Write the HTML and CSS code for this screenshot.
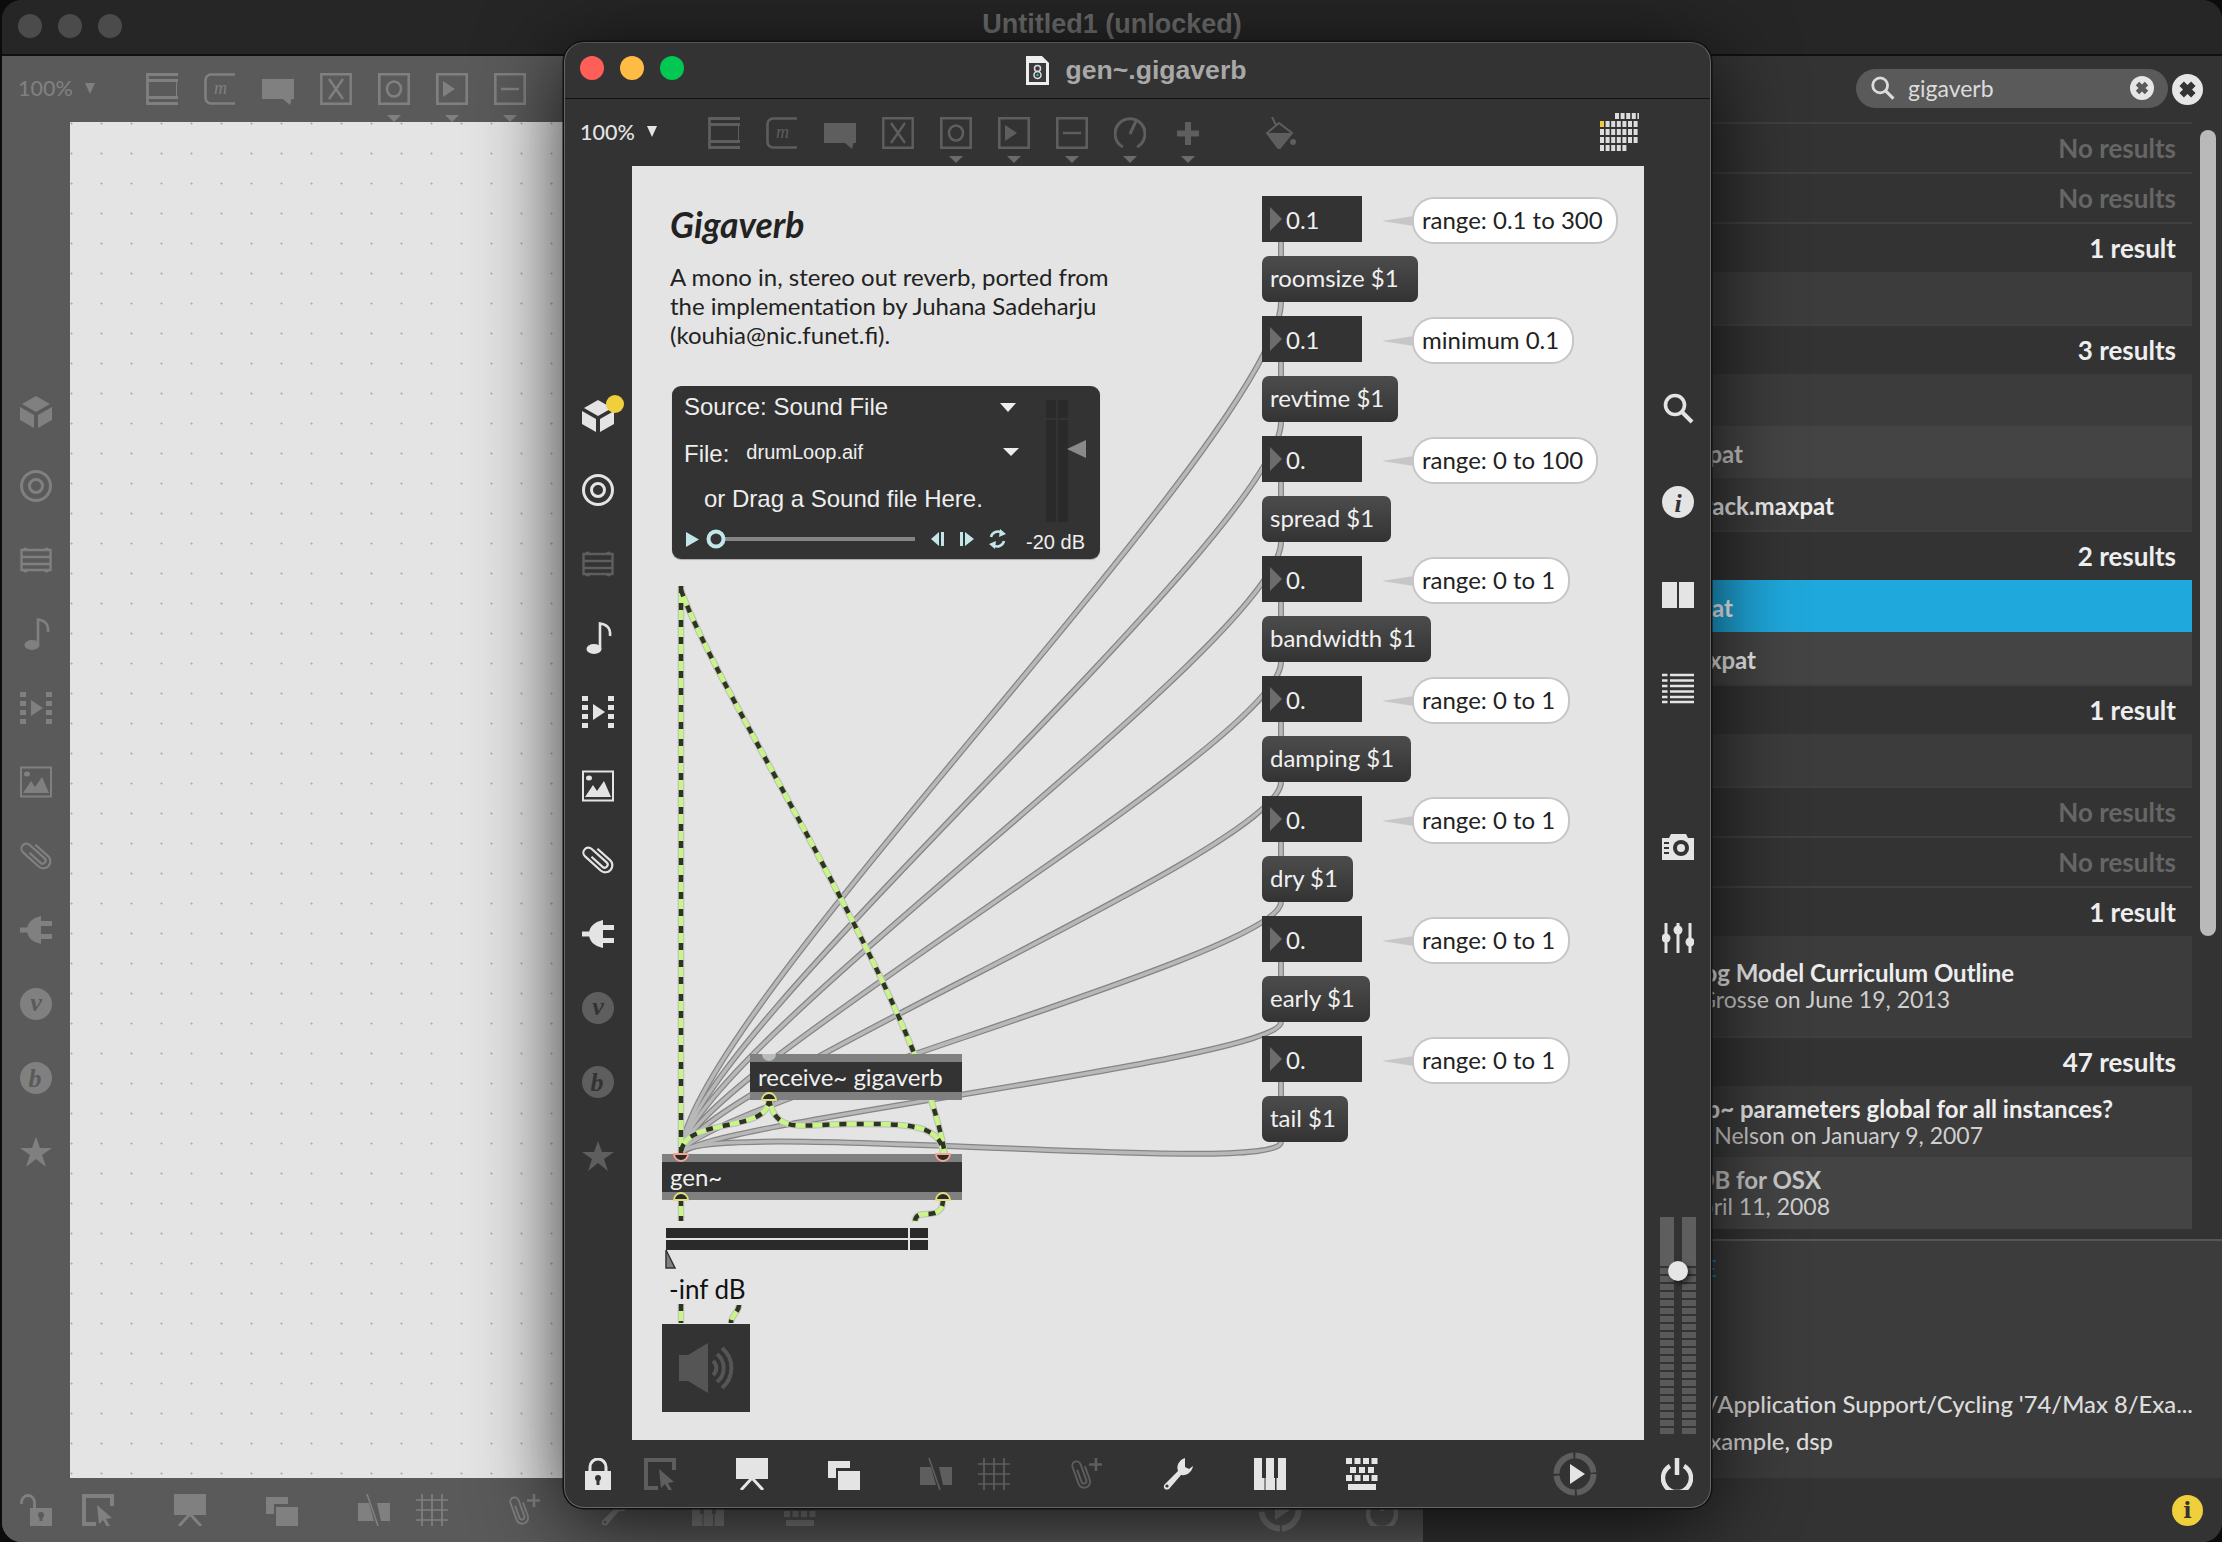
FILE: index.html
```html
<!DOCTYPE html>
<html>
  <head>
    <title>Untitled1 (unlocked)</title>
    <link rel="stylesheet" href="styles.css">
  </head>
  <body>
    <svg class="sprites" width="0" height="0">
      <symbol id="i-patcher" viewBox="0 0 32 32"><path d="M1.500 0V32M1 1.500H32M1 7.500H32M1 24.500H32M1 30.500H32" fill="none" stroke="currentColor" stroke-width="2.800"/><path d="M30.500 8V24" fill="none" stroke="currentColor" stroke-width="1"/></symbol>
      <symbol id="i-message" viewBox="0 0 32 32"><path d="M31 1.500H7a5.500 5.500 0 0 0-5.500 5.500V25a5.500 5.500 0 0 0 5.500 5.500H31" fill="none" stroke="currentColor" stroke-width="2.600"/><text x="10" y="21" class="svg-m" fill="currentColor">m</text></symbol>
      <symbol id="i-comment" viewBox="0 0 32 32"><path d="M0 6H32V26H29.500L28 32L21 26H0Z" fill="currentColor"/></symbol>
      <symbol id="i-xbox" viewBox="0 0 32 32"><path d="M1.300 1.300H30.700V30.700H1.300ZM9 6L23 26M23 6L9 26" fill="none" stroke="currentColor" stroke-width="2.400"/></symbol>
      <symbol id="i-obox" viewBox="0 0 32 32"><path d="M1.300 1.300H30.700V30.700H1.300Z" fill="none" stroke="currentColor" stroke-width="2.600"/><ellipse cx="16" cy="16" rx="7" ry="7.500" fill="none" stroke="currentColor" stroke-width="2.600"/></symbol>
      <symbol id="i-pbox" viewBox="0 0 32 32"><path d="M1.300 1.300H30.700V30.700H1.300Z" fill="none" stroke="currentColor" stroke-width="2.600"/><path d="M7 8L19 16L7 24Z" fill="currentColor"/></symbol>
      <symbol id="i-mbox" viewBox="0 0 32 32"><path d="M1.300 1.300H30.700V30.700H1.300ZM7 16H25" fill="none" stroke="currentColor" stroke-width="2.600"/></symbol>
      <symbol id="i-dial" viewBox="0 0 32 32"><path d="M9 30A15 15 0 1 1 23 30M16 17L22 4" fill="none" stroke="currentColor" stroke-width="3"/></symbol>
      <symbol id="i-plus" viewBox="0 0 32 32"><path d="M16 5V28M5 16.500H27" fill="none" stroke="currentColor" stroke-width="6"/></symbol>
      <symbol id="i-paint" viewBox="0 0 32 32"><path d="M3 16L15 6L28 16L15 32ZM12 8L8 0" fill="none" stroke="currentColor" stroke-width="2"/><path d="M3 16H28L15 32Z" fill="currentColor"/><circle cx="29" cy="25" r="3" fill="currentColor"/></symbol>

      <symbol id="i-cube" viewBox="0 0 32 32"><path d="M16 0L30 8L16 16L2 8ZM0 11L14 19V32L0 24ZM32 11L18 19V32L32 24Z" fill="currentColor"/></symbol>
      <symbol id="i-target" viewBox="0 0 32 32"><circle cx="16" cy="16" r="14.500" fill="none" stroke="currentColor" stroke-width="3"/><circle cx="16" cy="16" r="6.500" fill="none" stroke="currentColor" stroke-width="3"/></symbol>
      <symbol id="i-strip" viewBox="0 0 32 32"><path d="M1.500 6H30.500V26H1.500ZM1.500 13H30.500M1.500 20H30.500" fill="none" stroke="currentColor" stroke-width="2.400"/><path d="M3 6a2.500 2.500 0 0 1 5 0ZM24 6a2.500 2.500 0 0 1 5 0ZM3 26a2.500 2.500 0 0 0 5 0ZM24 26a2.500 2.500 0 0 0 5 0Z" fill="currentColor"/></symbol>
      <symbol id="i-note" viewBox="0 0 32 32"><ellipse cx="12" cy="27" rx="7.500" ry="5" fill="currentColor"/><path d="M18 27V1.500C24 2 29 6 28 14" fill="none" stroke="currentColor" stroke-width="2.600"/></symbol>
      <symbol id="i-film" viewBox="0 0 32 32"><path d="M0 0H6V5H0ZM0 9H6V14H0ZM0 18H6V23H0ZM0 27H6V32H0ZM26 0H32V5H26ZM26 9H32V14H26ZM26 18H32V23H26ZM26 27H32V32H26ZM11 8L23 16L11 24Z" fill="currentColor"/></symbol>
      <symbol id="i-image" viewBox="0 0 32 32"><path d="M1 1.500H31V30.500H1Z" fill="none" stroke="currentColor" stroke-width="2"/><path d="M3 27L11 15L15 21L22 11L29 27Z" fill="currentColor"/><ellipse cx="7" cy="8" rx="3" ry="2.500" fill="currentColor"/></symbol>
      <symbol id="i-clip" viewBox="0 0 32 32"><path transform="rotate(-48 16 16)" d="M14 9V24a3 3 0 0 0 6 0V4a5 5 0 0 0-10 0V25a7 7 0 0 0 14 0V8" fill="none" stroke="currentColor" stroke-width="2.200"/></symbol>
      <symbol id="i-plug" viewBox="0 0 32 32"><path d="M0 13.500H10V18.500H0ZM7 16C7 9 12 4 21 2V30C12 28 7 23 7 16ZM20 7H32V12H20ZM20 20H32V25H20Z" fill="currentColor"/></symbol>
      <symbol id="i-vee" viewBox="0 0 32 32"><circle cx="16" cy="16" r="16" fill="currentColor"/><text x="16" y="23" class="svg-badge" fill="var(--ico-bg)">v</text></symbol>
      <symbol id="i-bee" viewBox="0 0 32 32"><circle cx="16" cy="16" r="16" fill="currentColor"/><text x="15" y="25" class="svg-badge" fill="var(--ico-bg)">b</text></symbol>
      <symbol id="i-star" viewBox="0 0 32 32"><path d="M16 1L20 12H32L22 19L26 31L16 23L6 31L10 19L0 12H12Z" fill="currentColor"/></symbol>

      <symbol id="i-search" viewBox="0 0 32 32"><circle cx="13" cy="12" r="9.500" fill="none" stroke="currentColor" stroke-width="3.600"/><path d="M20 19L30 29" fill="none" stroke="currentColor" stroke-width="4"/></symbol>
      <symbol id="i-info" viewBox="0 0 32 32"><circle cx="16" cy="16" r="16" fill="currentColor"/><text x="16" y="26" class="svg-badge" fill="var(--ico-bg)">i</text></symbol>
      <symbol id="i-close" viewBox="0 0 32 32"><circle cx="16" cy="16" r="16" fill="currentColor"/><path d="M10 10L22 22M22 10L10 22" fill="none" stroke="var(--ico-bg)" stroke-width="6.500"/></symbol>
      <symbol id="i-cols" viewBox="0 0 32 32"><path d="M0 3H15V29H0ZM17 3H32V29H17Z" fill="currentColor"/></symbol>
      <symbol id="i-list" viewBox="0 0 32 32"><path d="M0 3H5.500M8 3H32M0 8.500H5.500M8 8.500H32M0 14H5.500M8 14H32M0 19.500H5.500M8 19.500H32M0 25H5.500M8 25H32M0 30H5.500M8 30H32" fill="none" stroke="currentColor" stroke-width="2.400"/></symbol>
      <symbol id="i-camera" viewBox="0 0 32 32"><path d="M0 8H7L9 4H24L26 8H32V30H0Z" fill="currentColor"/><circle cx="19" cy="18" r="8" fill="var(--ico-bg)"/><circle cx="19" cy="18" r="4" fill="currentColor"/><path d="M2 13H7M2 18H7M2 23H7" stroke="var(--ico-bg)" stroke-width="2"/></symbol>
      <symbol id="i-sliders" viewBox="0 0 32 32"><path d="M4 1V31M16 1V31M28 1V31" stroke="currentColor" stroke-width="3"/><circle cx="4" cy="16" r="4.500" fill="currentColor"/><circle cx="16" cy="8" r="4.500" fill="currentColor"/><circle cx="28" cy="20" r="4.500" fill="currentColor"/></symbol>

      <symbol id="i-lock" viewBox="0 0 32 32"><path d="M8 15V9a8 8 0 0 1 16 0V15" fill="none" stroke="currentColor" stroke-width="3"/><path d="M3 13H29V32H3Z" fill="currentColor"/><circle cx="16" cy="20" r="3" fill="var(--ico-bg)"/><path d="M14.500 20H17.500V27H14.500Z" fill="var(--ico-bg)"/></symbol>
      <symbol id="i-unlock" viewBox="0 0 32 32"><path d="M1.500 10V8a6.500 6.500 0 0 1 13 0V15" fill="none" stroke="currentColor" stroke-width="2.800"/><path d="M10 14H32V32H10Z" fill="currentColor"/><circle cx="21" cy="21" r="3" fill="var(--ico-bg)"/><path d="M19.500 21H22.500V27H19.500Z" fill="var(--ico-bg)"/></symbol>
      <symbol id="i-select" viewBox="0 0 32 32"><path d="M2 32V2H30V12M2 30H14" fill="none" stroke="currentColor" stroke-width="4"/><path d="M15 11L30 24L24 25L28 32L25 33L21 26L17 30Z" fill="currentColor"/></symbol>
      <symbol id="i-present" viewBox="0 0 32 32"><path d="M0 0H32V21H0Z" fill="currentColor"/><path d="M16 20L5 32M16 20L27 32" fill="none" stroke="currentColor" stroke-width="3"/></symbol>
      <symbol id="i-layers" viewBox="0 0 32 32"><path d="M0 3H22V10H8V20H0ZM10 13H32V32H10Z" fill="currentColor"/></symbol>
      <symbol id="i-split" viewBox="0 0 32 32"><path d="M0 9H11L16 27H0ZM19 9H32V27H23Z" fill="currentColor"/><path d="M9 0L20 32" stroke="currentColor" stroke-width="1.600"/></symbol>
      <symbol id="i-grid" viewBox="0 0 32 32"><path d="M6 0V32M16 0V32M26 0V32M0 6H32M0 16H32M0 26H32" fill="none" stroke="currentColor" stroke-width="1.700"/></symbol>
      <symbol id="i-clipadd" viewBox="0 0 32 32"><path transform="translate(-2 3) rotate(-20 14 16) scale(.85)" d="M14 9V24a3 3 0 0 0 6 0V4a5 5 0 0 0-10 0V25a7 7 0 0 0 14 0V8" fill="none" stroke="currentColor" stroke-width="2.200"/><path d="M26 0V13M19 6.500H32" stroke="currentColor" stroke-width="2.600"/></symbol>
      <symbol id="i-wrench" viewBox="0 0 32 32"><path d="M23 0C17 2 14 8 16 13L3 26C0 29 3 33 7 31L19 17C25 18 30 14 31 8L27 11L23 9Z" fill="currentColor"/><circle cx="5" cy="28" r="1.600" fill="var(--ico-bg)"/></symbol>
      <symbol id="i-piano" viewBox="0 0 32 32"><path d="M0 0H8V20H10.500V32H0ZM12 0H20V20H21V32H11.500V20H12ZM24 0H32V32H22.500V20H24Z" fill="currentColor"/></symbol>
      <symbol id="i-keys" viewBox="0 0 32 32"><path d="M0 0H6V6H0ZM8.500 0H14.500V6H8.500ZM17 0H23V6H17ZM25.500 0H31.500V6H25.500ZM4 9H10V15H4ZM13 9H19V15H13ZM22 9H28V15H22ZM0 17H6V23H0ZM8.500 17H14.500V23H8.500ZM17 17H23V23H17ZM25.500 17H31.500V23H25.500ZM2 26H30V32H2Z" fill="currentColor"/></symbol>
      <symbol id="i-audio" viewBox="0 0 44 44"><circle cx="22" cy="22" r="18.500" fill="none" stroke="currentColor" stroke-width="6" stroke-dasharray="27 2"/><path d="M17 12L32 22L17 32Z" fill="var(--ico-hi)"/></symbol>
      <symbol id="i-power" viewBox="0 0 32 32"><path d="M9 8A14 14 0 1 0 23 8" fill="none" stroke="currentColor" stroke-width="4.500"/><path d="M16 0V17" stroke="currentColor" stroke-width="4.500"/></symbol>
    </svg>

    <div class="desk">

      <div class="window back">
        <div class="titlebar">
          <div class="lights"><i></i><i></i><i></i></div>
          <div class="title-back">Untitled1 (unlocked)</div>
        </div>
        <div class="back-split">
          <div class="patcher">
            <div class="toolbar">
              <div class="zoom">100%<span class="zoom-arrow"></span></div>
              <span class="tool"><svg class="icon"><use href="#i-patcher"/></svg></span>
              <span class="tool"><svg class="icon"><use href="#i-message"/></svg></span>
              <span class="tool"><svg class="icon"><use href="#i-comment"/></svg></span>
              <span class="tool"><svg class="icon"><use href="#i-xbox"/></svg></span>
              <span class="tool menu"><svg class="icon"><use href="#i-obox"/></svg></span>
              <span class="tool menu"><svg class="icon"><use href="#i-pbox"/></svg></span>
              <span class="tool menu"><svg class="icon"><use href="#i-mbox"/></svg></span>
            </div>
            <div class="patcher-body">
              <div class="side">
                <svg class="icon"><use href="#i-cube"/></svg>
                <svg class="icon"><use href="#i-target"/></svg>
                <svg class="icon"><use href="#i-strip"/></svg>
                <svg class="icon"><use href="#i-note"/></svg>
                <svg class="icon"><use href="#i-film"/></svg>
                <svg class="icon"><use href="#i-image"/></svg>
                <svg class="icon"><use href="#i-clip"/></svg>
                <svg class="icon"><use href="#i-plug"/></svg>
                <svg class="icon"><use href="#i-vee"/></svg>
                <svg class="icon"><use href="#i-bee"/></svg>
                <svg class="icon"><use href="#i-star"/></svg>
              </div>
              <div class="canvas dotted"></div>
            </div>
            <div class="bottombar">
              <svg class="icon"><use href="#i-unlock"/></svg>
              <svg class="icon b-select"><use href="#i-select"/></svg>
              <svg class="icon b-wide"><use href="#i-present"/></svg>
              <svg class="icon b-wide"><use href="#i-layers"/></svg>
              <svg class="icon b-wide"><use href="#i-split"/></svg>
              <svg class="icon"><use href="#i-grid"/></svg>
              <svg class="icon b-wide"><use href="#i-clipadd"/></svg>
              <svg class="icon b-wide"><use href="#i-wrench"/></svg>
              <svg class="icon b-wide"><use href="#i-piano"/></svg>
              <svg class="icon b-wide"><use href="#i-keys"/></svg>
              <svg class="icon-audio"><use href="#i-audio"/></svg>
              <svg class="icon b-power"><use href="#i-power"/></svg>
            </div>
          </div>

          <div class="finder">
            <div class="finder-top">
              <div class="search">
                <svg class="search-icon"><use href="#i-search"/></svg>
                <span class="search-text">gigaverb</span>
                <svg class="clear small"><use href="#i-close"/></svg>
              </div>
              <svg class="clear"><use href="#i-close"/></svg>
            </div>
            <div class="finder-mid">
              <div class="results">
                <div class="head none">No results</div>
                <div class="head none">No results</div>
                <div class="head">1 result</div>
                <div class="item"></div>
                <div class="head">3 results</div>
                <div class="item"></div>
                <div class="item alt"><span class="line dim e-pat">gigaverb.maxpat</span></div>
                <div class="item"><span class="line e-ack">gigaverb.rack.maxpat</span></div>
                <div class="head">2 results</div>
                <div class="item selected"><span class="line e-at">gigaverb.maxpat</span></div>
                <div class="item alt"><span class="line e-xpat">gigaverb.maxpat</span></div>
                <div class="head">1 result</div>
                <div class="item"></div>
                <div class="head none">No results</div>
                <div class="head none">No results</div>
                <div class="head">1 result</div>
                <div class="item tall">
                  <span class="line e-curric">Analog Model Curriculum Outline</span>
                  <span class="sub e-curric-sub">Posted by Grosse on June 19, 2013</span>
                </div>
                <div class="head">47 results</div>
                <div class="item two">
                  <span class="line e-param">Make gigaverb~ parameters global for all instances?</span>
                  <span class="sub e-param-sub">Posted by Nelson on January 9, 2007</span>
                </div>
                <div class="item two alt">
                  <span class="line dim e-osx">SDB for OSX</span>
                  <span class="sub e-osx-sub">Posted on April 11, 2008</span>
                </div>
              </div>
              <div class="scroll-track"><div class="scroll-thumb"></div></div>
            </div>
            <div class="detail">
              <span class="detail-link">gigaverb E</span>
              <span class="detail-line">~/Library/Application Support/Cycling '74/Max 8/Exa...</span>
              <span class="detail-line e-tags">gen, example, dsp</span>
            </div>
            <div class="finder-foot"><span class="info-badge">i</span></div>
          </div>
        </div>
      </div>

      <div class="window main">
        <div class="titlebar">
          <div class="lights color"><i></i><i></i><i></i></div>
          <div class="title-main">
            <svg class="doc" viewBox="0 0 23 29">
              <path d="M0 0H16L23 7V29H0Z" fill="#eee"/>
              <path d="M3 7H20V26H3Z" fill="#3a3a3a"/>
              <circle cx="11.500" cy="12.500" r="3" fill="none" stroke="#ddd" stroke-width="1.500"/>
              <circle cx="11.500" cy="19" r="3.500" fill="none" stroke="#ddd" stroke-width="1.500"/>
              <circle cx="11.500" cy="19" r="1.200" fill="#2fb8c6"/>
            </svg>
            gen~.gigaverb
          </div>
        </div>
        <div class="toolbar">
          <div class="zoom">100%<span class="zoom-arrow"></span></div>
          <span class="tool"><svg class="icon off"><use href="#i-patcher"/></svg></span>
          <span class="tool"><svg class="icon off"><use href="#i-message"/></svg></span>
          <span class="tool"><svg class="icon off"><use href="#i-comment"/></svg></span>
          <span class="tool"><svg class="icon off"><use href="#i-xbox"/></svg></span>
          <span class="tool menu"><svg class="icon off"><use href="#i-obox"/></svg></span>
          <span class="tool menu"><svg class="icon off"><use href="#i-pbox"/></svg></span>
          <span class="tool menu"><svg class="icon off"><use href="#i-mbox"/></svg></span>
          <span class="tool menu"><svg class="icon off"><use href="#i-dial"/></svg></span>
          <span class="tool menu"><svg class="icon off"><use href="#i-plus"/></svg></span>
          <span class="tool paint"><svg class="icon off"><use href="#i-paint"/></svg></span>
          <svg class="palette" viewBox="0 0 39 39">
            <path d="M15 3H39M0 11H39M0 19H39M0 27H39M0 35H27" fill="none" stroke="#ddd" stroke-width="6" stroke-dasharray="4 1.600"/>
            <path d="M0 8H4V14H0Z" fill="#f0c93c"/>
          </svg>
        </div>
        <div class="patcher-body">
          <div class="side">
            <div class="cube-wrap"><svg class="icon"><use href="#i-cube"/></svg><span class="cube-dot"></span></div>
            <svg class="icon"><use href="#i-target"/></svg>
            <svg class="icon off"><use href="#i-strip"/></svg>
            <svg class="icon"><use href="#i-note"/></svg>
            <svg class="icon"><use href="#i-film"/></svg>
            <svg class="icon"><use href="#i-image"/></svg>
            <svg class="icon"><use href="#i-clip"/></svg>
            <svg class="icon"><use href="#i-plug"/></svg>
            <svg class="icon off"><use href="#i-vee"/></svg>
            <svg class="icon off"><use href="#i-bee"/></svg>
            <svg class="icon off"><use href="#i-star"/></svg>
          </div>

          <div class="canvas">
            <svg class="cords" viewBox="632 166 1012 1274">
              <defs>
                <g id="gray-cords">
                  <path d="M1281 242V256M1281 362V376M1281 482V496M1281 602V616M1281 722V736M1281 842V856M1281 962V976M1281 1082V1096"/>
                  <path d="M1281 302C1281 430 681 1025 681 1155"/>
                  <path d="M1281 422C1281 530 681 1045 681 1155"/>
                  <path d="M1281 542C1281 640 681 1060 681 1155"/>
                  <path d="M1281 662C1281 745 681 1080 681 1155"/>
                  <path d="M1281 782C1281 850 681 1095 681 1155"/>
                  <path d="M1281 902C1281 955 681 1110 681 1155"/>
                  <path d="M1281 1022C1281 1060 681 1125 681 1155"/>
                  <path d="M1281 1142C1281 1178 681 1116 681 1155"/>
                </g>
                <g id="sig-cords">
                  <path d="M681 586V1155"/>
                  <path d="M681 590C720 700 920 1000 945 1155"/>
                  <path d="M769 1099C769 1135 681 1115 681 1155"/>
                  <path d="M769 1099C776 1135 800 1124 850 1124S943 1122 943 1155"/>
                  <path d="M681 1199V1221"/>
                  <path d="M943 1199C943 1225 915 1205 915 1222"/>
                  <path d="M681 1304V1323"/>
                  <path d="M739 1305C739 1312 731 1315 731 1323"/>
                </g>
              </defs>
              <use href="#gray-cords" class="cord-edge"/>
              <use href="#gray-cords" class="cord-fill"/>
              <use href="#sig-cords" class="sig-edge"/>
              <use href="#sig-cords" class="sig-fill"/>
              <use href="#sig-cords" class="sig-dash"/>
            </svg>

            <h1 class="patch-title">Gigaverb</h1>
            <p class="patch-text">A mono in, stereo out reverb, ported from<br>the implementation by Juhana Sadeharju<br>(kouhia@nic.funet.fi).</p>

            <div class="player">
              <div class="player-main">
                <div class="player-row r1">Source: Sound File<span class="drop"></span></div>
                <div class="player-row r2">File:<span class="file-name">drumLoop.aif</span><span class="drop small"></span></div>
                <div class="player-row r3">or Drag a Sound file Here.</div>
                <svg class="transport" viewBox="684 524 336 30">
                  <path d="M686 532L699 539.500L686 547Z" fill="#c2e6ea"/>
                  <path d="M716 537H915V541H716Z" fill="#858585"/>
                  <circle cx="716" cy="539" r="7.500" fill="#333" stroke="#c2e6ea" stroke-width="4"/>
                  <path d="M931 539L939 532V546ZM941 532H944V546H941ZM960 532H963V546H960ZM965 532L974 539L965 546Z" fill="#c2e6ea"/>
                  <path d="M991 537a7 7 0 0 1 11-4M1004 541a7 7 0 0 1-11 4" fill="none" stroke="#c2e6ea" stroke-width="2.500"/>
                  <path d="M1000 529L1006 534L999 537ZM995 549L989 544L996 541Z" fill="#c2e6ea"/>
                </svg>
              </div>
              <div class="player-meter"><i></i><i></i></div>
              <span class="player-gain"></span>
              <span class="player-db">-20 dB</span>
            </div>

            <div class="params">
              <div class="param-row"><div class="num"><span class="num-arrow"></span>0.1</div><div class="bubble">range: 0.1 to 300</div></div>
              <div class="msg m-roomsize">roomsize $1</div>
              <div class="param-row"><div class="num"><span class="num-arrow"></span>0.1</div><div class="bubble">minimum 0.1</div></div>
              <div class="msg m-revtime">revtime $1</div>
              <div class="param-row"><div class="num"><span class="num-arrow"></span>0.</div><div class="bubble">range: 0 to 100</div></div>
              <div class="msg m-spread">spread $1</div>
              <div class="param-row"><div class="num"><span class="num-arrow"></span>0.</div><div class="bubble">range: 0 to 1</div></div>
              <div class="msg m-bandwidth">bandwidth $1</div>
              <div class="param-row"><div class="num"><span class="num-arrow"></span>0.</div><div class="bubble">range: 0 to 1</div></div>
              <div class="msg m-damping">damping $1</div>
              <div class="param-row"><div class="num"><span class="num-arrow"></span>0.</div><div class="bubble">range: 0 to 1</div></div>
              <div class="msg m-dry">dry $1</div>
              <div class="param-row"><div class="num"><span class="num-arrow"></span>0.</div><div class="bubble">range: 0 to 1</div></div>
              <div class="msg m-early">early $1</div>
              <div class="param-row"><div class="num"><span class="num-arrow"></span>0.</div><div class="bubble">range: 0 to 1</div></div>
              <div class="msg m-tail">tail $1</div>
            </div>

            <div class="box obj-receive">receive~ gigaverb</div>
            <div class="box obj-gen">gen~</div>
            <div class="obj-meter"><i></i><i></i></div>
            <div class="obj-label">-inf dB</div>
            <div class="obj-speaker">
              <svg class="speaker" viewBox="0 0 88 88">
                <path d="M17 31H26L46 19V69L26 57H17Z" fill="#555"/>
                <path d="M51 37a9 9 0 0 1 0 14M55 30a18 18 0 0 1 0 28M60 24a26 26 0 0 1 0 40" fill="none" stroke="#555" stroke-width="4"/>
              </svg>
            </div>

            <svg class="cords over" viewBox="632 166 1012 1274">
              <path class="port-in" d="M674 1154a7 7 0 0 0 14 0ZM936 1154a7 7 0 0 0 14 0Z"/>
              <path class="port-out" d="M674 1200a7 7 0 0 1 14 0ZM936 1200a7 7 0 0 1 14 0ZM762 1100a7 7 0 0 1 14 0Z"/>
              <path d="M762 1054a7 7 0 0 0 14 0Z" fill="#b4bcc0"/>
              <path d="M666 1250V1268H675Z" fill="#808080" stroke="#333" stroke-width="1.500"/>
            </svg>
          </div>

          <div class="side right">
            <svg class="icon"><use href="#i-search"/></svg>
            <svg class="icon"><use href="#i-info"/></svg>
            <svg class="icon"><use href="#i-cols"/></svg>
            <svg class="icon"><use href="#i-list"/></svg>
            <svg class="icon group"><use href="#i-camera"/></svg>
            <svg class="icon after-group"><use href="#i-sliders"/></svg>
            <div class="vol"><i></i><i></i><span class="vol-knob"></span></div>
          </div>
        </div>
        <div class="bottombar">
          <svg class="icon"><use href="#i-lock"/></svg>
          <svg class="icon off b-select"><use href="#i-select"/></svg>
          <svg class="icon b-wide"><use href="#i-present"/></svg>
          <svg class="icon b-wide"><use href="#i-layers"/></svg>
          <svg class="icon off b-wide"><use href="#i-split"/></svg>
          <svg class="icon off"><use href="#i-grid"/></svg>
          <svg class="icon off b-wide"><use href="#i-clipadd"/></svg>
          <svg class="icon b-wide"><use href="#i-wrench"/></svg>
          <svg class="icon b-wide"><use href="#i-piano"/></svg>
          <svg class="icon b-wide"><use href="#i-keys"/></svg>
          <svg class="icon-audio off"><use href="#i-audio"/></svg>
          <svg class="icon b-power"><use href="#i-power"/></svg>
        </div>
      </div>

    </div>
  </body>
</html>
```

FILE: styles.css
```css
body { margin: 0; background: #0c0c0c; font-family: "Lato", "Liberation Sans", sans-serif; }

.sprites { display: none; }
.svg-m { font: italic 18px "Liberation Serif", serif; }
.svg-badge { font: italic bold 26px "Liberation Serif", serif; text-anchor: middle; }

.desk { position: relative; width: 2222px; height: 1542px; overflow: hidden; }

/* windows */
.window { position: absolute; display: flex; flex-direction: column; box-sizing: border-box; }
.back { left: 2px; top: 0; width: 2220px; height: 1542px; border-radius: 20px; overflow: hidden; background: #333; color: #808080; --ico-bg: #5a5a5a; --ico-hi: #808080; }
.main {
  left: 564px; top: 42px; width: 1147px; height: 1466px;
  border-radius: 20px; overflow: hidden; background: #333; color: #e4e4e4; --ico-bg: #333; --ico-hi: #e4e4e4;
  box-shadow: 0 0 0 1.5px #111, 0 14px 85px rgba(0, 0, 0, .8);
}
/* overflow:hidden would not clip the shadow, the light rim is drawn apart */
.main::after { content: ""; position: absolute; inset: 0; border-radius: 20px; border: 1.5px solid #666; border-top-color: #555; pointer-events: none; }

.titlebar { position: relative; flex: none; display: flex; align-items: center; justify-content: center; }
.back .titlebar { height: 54px; background: #262626; border-bottom: 2px solid #101010; }
.main .titlebar { height: 56px; background: #333; border-bottom: 1.5px solid #111; }

.lights { position: absolute; left: 16px; top: 14px; display: flex; gap: 16px; }
.lights i { display: block; width: 24px; height: 24px; border-radius: 50%; background: #4b4b4b; }
.lights.color { left: 16px; }
.lights.color i:nth-child(1) { background: #ff5f57; }
.lights.color i:nth-child(2) { background: #ffbb44; }
.lights.color i:nth-child(3) { background: #00c853; }

.title-back { font: bold 27px "Liberation Sans", sans-serif; color: #6e6e6e; margin-top: -6px; }
.title-main { display: flex; align-items: center; gap: 16px; font: bold 26.600px "Liberation Sans", sans-serif; color: #a8a8a8; margin-left: -2px; }
.doc { width: 23px; height: 29px; }

/* icons */
.icon { display: block; flex: none; width: 32px; height: 32px; color: inherit; }
.back .icon { color: #808080; }
.icon.off, .icon-audio.off { color: #5e5e5e; }
.icon-audio { display: block; width: 44px; height: 44px; flex: none; margin-left: auto; }

/* toolbar */
.toolbar { flex: none; display: flex; align-items: center; gap: 26px; }
.back .toolbar { height: 66px; background: #5a5a5a; }
.main .toolbar { height: 67px; background: #333; }
.zoom { width: 128px; margin-left: 16px; margin-right: -26px; font: 500 21.500px "Lato", sans-serif; display: flex; align-items: center; gap: 12px; margin-top: -2px; }
.main .zoom { color: #e4e4e4; }
.zoom-arrow { width: 0; height: 0; border: 5.500px solid transparent; border-top: 11px solid currentColor; border-bottom: 0; }
.tool { position: relative; display: block; width: 32px; height: 32px; }
.tool.menu::after { content: ""; position: absolute; left: 9px; top: 39px; border: 7px solid transparent; border-top: 7px solid #6a6a6a; border-bottom: 0; }
.back .tool.menu::after { border-top-color: #808080; top: 42px; }
.tool.paint { margin-left: 34px; }
.palette { width: 39px; height: 39px; margin-left: auto; margin-right: 72px; }

/* patcher */
.back-split { flex: 1; min-height: 0; display: flex; }
.patcher { flex: none; width: 1421px; display: flex; flex-direction: column; background: #5a5a5a; }
.patcher-body { flex: 1; min-height: 0; display: flex; }
.side { flex: none; box-sizing: border-box; width: 68px; display: flex; flex-direction: column; align-items: center; gap: 42px; }
.back .side { padding-top: 274px; background: #5a5a5a; }
.main .side { padding-top: 234px; background: #333; }
.main .side.right { width: 67px; padding-top: 227px; gap: 61px; }
.side.right .group { margin-top: 65px; }
.side.right .after-group { margin-top: -1px; }
.canvas { position: relative; flex: 1; min-width: 0; background: #e4e4e4; overflow: hidden; }
.canvas.dotted { background-image: radial-gradient(circle at 1.5px 1.5px, #b0b0b0 .8px, transparent 1.4px); background-size: 30px 30px; }

.bottombar { flex: none; display: flex; align-items: center; gap: 26px; }
.back .bottombar { height: 64px; padding: 0 25px 0 18px; background: #5a5a5a; }
.main .bottombar { height: 68px; padding: 0 18px 0 18px; background: #333; }
.b-select { margin-left: 4px; }
.b-wide { margin-left: 34px; }
.b-power { margin-left: 38px; }

/* cube with the yellow update dot */
.cube-wrap { position: relative; width: 32px; height: 32px; }
.cube-dot { position: absolute; left: 24px; top: -5px; width: 18px; height: 18px; border-radius: 50%; background: #f0cf3c; }

/* volume on the right side */
.vol { position: relative; margin-top: auto; margin-bottom: 5px; width: 36px; height: 218px; display: flex; justify-content: space-between; }
.vol i { display: block; width: 14px; height: 100%; background: linear-gradient(#5e5e5e, #5e5e5e) 0 0 / 100% 49px no-repeat, repeating-linear-gradient(#5a5a5a 0 6px, #333 6px 8px) 0 51px / 100% 167px no-repeat; }
.vol-knob { position: absolute; left: 8px; top: 44px; width: 20px; height: 20px; border-radius: 50%; background: #e6e6e6; box-shadow: 3px 3px 5px rgba(0, 0, 0, .5); }

/* cords */
.cords { position: absolute; left: 0; top: 0; width: 1012px; height: 1274px; }
.cords.over { pointer-events: none; }
.cord-edge { fill: none; stroke: #858585; stroke-width: 6px; }
.cord-fill { fill: none; stroke: #b8b8b8; stroke-width: 3.500px; }
.sig-edge { fill: none; stroke: #bdbdbd; stroke-width: 6.500px; }
.sig-fill { fill: none; stroke: #c8f488; stroke-width: 4.500px; }
.sig-dash { fill: none; stroke: #2f3226; stroke-width: 4.500px; stroke-dasharray: 7 10; }
.port-in { fill: #2b2b2b; stroke: #f2a592; stroke-width: 1.800px; }
.port-out { fill: #2b2b2b; stroke: #dfe07a; stroke-width: 1.800px; }

/* comment text on the patch */
.patch-title { position: absolute; left: 38px; top: 37px; margin: 0; font: italic bold 35.500px "Lato", sans-serif; color: #222; }
.patch-text { position: absolute; left: 38px; top: 96px; margin: 0; font: 24px/29px "Lato", sans-serif; color: #222; }

/* audio player object */
.player { position: absolute; left: 40px; top: 220px; box-sizing: border-box; width: 428px; height: 173px; padding-left: 12px; border-radius: 9px; display: flex; background: #333; color: #eee; font: 24px "Liberation Sans", sans-serif; box-shadow: 0 1px 1px #aaa; }
.player-main { width: 336px; display: flex; flex-direction: column; }
.player-row { display: flex; align-items: center; white-space: nowrap; box-sizing: border-box; }
.r1 { height: 42px; }
.r2 { height: 50px; padding-top: 2px; }
.r3 { height: 46px; padding: 0 0 4px 20px; }
.file-name { font-size: 20px; margin-left: 17px; margin-top: -4px; }
.drop { margin-left: auto; margin-right: 4px; border: 8.500px solid transparent; border-top: 9px solid #eee; border-bottom: 0; }
.drop.small { margin-right: 1px; border-width: 8px 8px 0; margin-top: -4px; }
.transport { width: 336px; height: 30px; }
.player-meter { margin: 14px 0 0 26px; display: flex; gap: 2px; }
.player-meter i { display: block; width: 10px; height: 122px; background: linear-gradient(#2a2a2a, #2a2a2a) 0 0 / 100% 18px no-repeat, linear-gradient(#2a2a2a, #2a2a2a) 0 20px / 100% 102px no-repeat; }
.player-gain { position: absolute; left: 395px; top: 54px; width: 19px; height: 18px; background: #8a8a8a; clip-path: polygon(0 50%, 100% 0, 100% 100%); }
.player-db { position: absolute; right: 15px; bottom: 5px; font-size: 20px; }

/* number + message columns */
.params { position: absolute; left: 630px; top: 30px; display: flex; flex-direction: column; align-items: flex-start; gap: 14px; color: #f0f0f0; font-size: 24px; }
.param-row { display: flex; height: 46px; }
.num { display: flex; align-items: center; box-sizing: border-box; width: 100px; height: 46px; padding-left: 8px; background: #333; }
.num-arrow { width: 12px; height: 24px; margin-right: 4px; background: #6c6c6c; clip-path: polygon(0 0, 100% 50%, 0 100%); }
.msg { box-sizing: border-box; height: 46px; line-height: 44px; padding-left: 8px; border-radius: 7px; background: linear-gradient(#4c4c4c, #333); }
.m-roomsize { width: 156px; }
.m-revtime { width: 136px; }
.m-spread { width: 129px; }
.m-bandwidth { width: 169px; }
.m-damping { width: 149px; }
.m-dry { width: 91px; }
.m-early { width: 108px; }
.m-tail { width: 86px; }
.bubble { position: relative; margin-left: 50px; margin-top: 1px; box-sizing: border-box; height: 47px; line-height: 41px; padding: 0 13px 0 8px; background: #fff; border: 2px solid #c6c6c6; border-radius: 22px; color: #222; }
.bubble::before { content: ""; position: absolute; left: -32px; top: 17px; width: 32px; height: 10px; background: #c6c6c6; clip-path: polygon(0 50%, 100% 0, 100% 100%); }

/* boxes */
.box { position: absolute; box-sizing: border-box; height: 46px; padding-left: 8px; background: #333; border-top: 8px solid #808080; border-bottom: 8px solid #808080; color: #f0f0f0; font-size: 24px; line-height: 30px; }
.obj-receive { left: 118px; top: 888px; width: 212px; }
.obj-gen { left: 30px; top: 988px; width: 300px; }
.obj-meter { position: absolute; left: 34px; top: 1062px; display: flex; flex-direction: column; gap: 2px; }
.obj-meter i { display: block; width: 262px; height: 10px; background: linear-gradient(90deg, #2a2a2a 242px, #e4e4e4 242px 244px, #2a2a2a 244px); }
.obj-label { position: absolute; left: 37px; top: 1107px; font-size: 26px; color: #111; }
.obj-speaker { position: absolute; left: 30px; top: 1158px; width: 88px; height: 88px; background: #333; }
.speaker { display: block; width: 88px; height: 88px; }

/* finder panel */
.finder { flex: 1; min-width: 0; display: flex; flex-direction: column; background: #333; color: #eee; --ico-bg: #333; }
.finder-top { flex: none; height: 66px; box-sizing: border-box; padding-right: 19px; display: flex; align-items: center; justify-content: flex-end; gap: 4px; }
.search { width: 312px; height: 39px; box-sizing: border-box; padding: 0 14px; display: flex; align-items: center; border-radius: 20px; background: #5a5a5a; color: #dcdcdc; margin-bottom: 2px; --ico-bg: #5a5a5a; }
.search-icon { width: 25px; height: 25px; }
.search-text { margin-left: 13px; font-size: 23px; }
.clear { flex: none; display: block; width: 31px; height: 31px; color: #e6e6e6; }
.clear.small { width: 24px; height: 24px; margin-left: auto; }

.finder-mid { flex: none; height: 1117px; display: flex; }
.results { flex: 1; min-width: 0; overflow: hidden; }
.scroll-track { flex: none; width: 30px; }
.scroll-thumb { width: 16px; height: 806px; margin: 8px 0 0 8px; border-radius: 8px; background: #b9b9b9; }

.head { height: 48px; border-top: 2px solid #404040; padding-right: 16px; display: flex; align-items: center; justify-content: flex-end; font-weight: bold; font-size: 26px; background: #333; }
.head.none { color: #666; }
.item { box-sizing: border-box; height: 52px; padding-top: 3px; display: flex; flex-direction: column; justify-content: center; background: #3c3c3c; }
.item.alt { background: #444; }
.item.tall { height: 100px; padding-top: 0; }
.item.two { height: 71px; padding-top: 0; }
.item.two.alt { height: 72px; }
.item.selected { background: #1fa8dc; color: #fff; }

.line, .sub, .detail-line { display: block; text-align: right; white-space: nowrap; }
.line { font-weight: bold; font-size: 24px; line-height: 27px; }
.line.dim { color: #c8c8c8; }
.sub { font-size: 23px; line-height: 27px; color: #cfcfcf; }
.e-pat { padding-right: 449px; }
.e-ack { padding-right: 358px; }
.e-at { padding-right: 459px; }
.e-xpat { padding-right: 436px; }
.e-curric { padding-right: 178px; }
.e-curric-sub { padding-right: 242px; }
.e-param { padding-right: 79px; }
.e-param-sub { padding-right: 209px; }
.e-osx { padding-right: 371px; }
.e-osx-sub { padding-right: 362px; }

.detail { flex: none; height: 239px; box-sizing: border-box; border-top: 2px solid #565656; padding: 0 29px 18px 0; background: #3c3c3c; display: flex; flex-direction: column; justify-content: flex-end; }
.detail-link { display: block; text-align: right; padding-right: 476px; margin-bottom: 104px; font-size: 24px; line-height: 29px; color: #0a84c0; white-space: nowrap; }
.detail-line { font-weight: 500; font-size: 23.800px; line-height: 37px; color: #dcdcdc; }
.e-tags { padding-right: 360px; }

.finder-foot { flex: 1; display: flex; align-items: center; justify-content: flex-end; padding-right: 19px; }
.info-badge { display: flex; align-items: center; justify-content: center; width: 31px; height: 31px; border-radius: 50%; background: #f0cf3c; color: #333; font: bold 22px "DejaVu Serif", serif; }
```
